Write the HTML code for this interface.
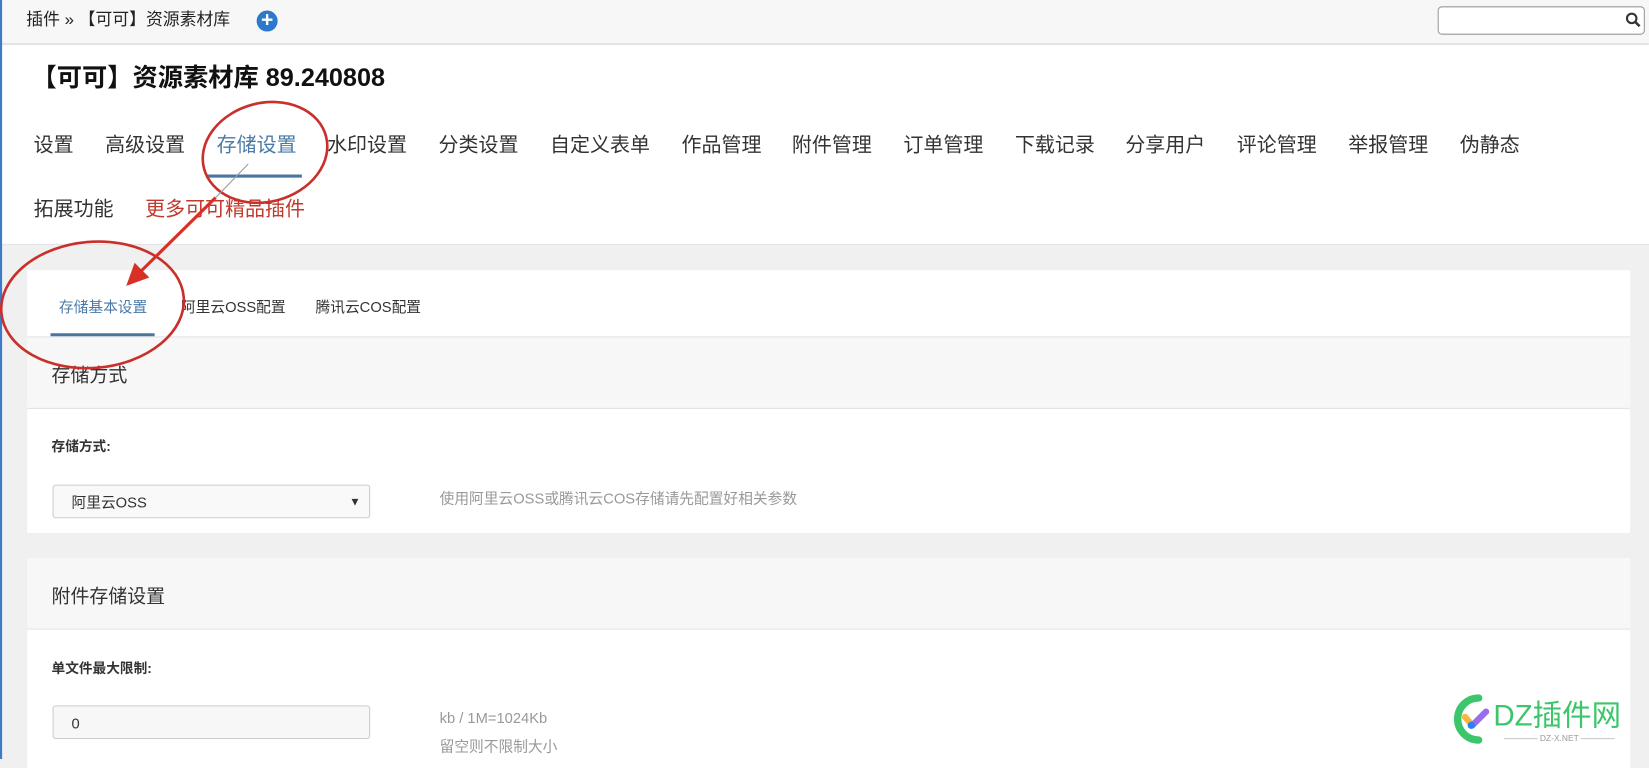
<!DOCTYPE html>
<html><head><meta charset="utf-8">
<style>
html,body{margin:0;padding:0;width:1649px;height:759px;overflow:hidden;background:#f0f0f0;}
#w{position:absolute;left:0;top:0;width:1568px;height:722px;transform:scale(1.0517,1.0512);transform-origin:0 0;font-family:"Liberation Sans","Noto Sans CJK SC",sans-serif;color:#333;background:#f0f0f0;}
.a{position:absolute;white-space:nowrap;}
#top{position:absolute;left:0;top:0;width:1568px;height:41px;background:#f7f7f7;box-shadow:0 2px 2px #ddd;}
#hd{position:absolute;left:0;top:43px;width:1568px;height:189px;background:#fff;border-bottom:1px solid #e3e3e3;}
.nav{position:absolute;top:127px;font-size:19px;color:#333;line-height:24px;}
.card{position:absolute;left:26px;width:1524px;background:#fff;}
.sh{position:absolute;left:0;width:1524px;height:67px;background:#f7f7f7;border-top:1px solid #e3e3e3;border-bottom:1px solid #e3e3e3;}
.inp{position:absolute;left:50px;width:302px;height:32px;border:1px solid #ccc;border-radius:3px;background:#f7f7f7;font-size:14px;line-height:32px;box-sizing:border-box;padding-left:17px;color:#333;}
</style></head><body><div id="w">
<div style="position:absolute;left:0;top:0;width:2px;height:722px;background:#3d7bc6;z-index:5"></div>
<div id="top"></div>
<div class="a" style="left:25px;top:10px;font-size:16px;line-height:20px;color:#222">插件 » 【可可】资源素材库</div>
<div class="a" style="left:244px;top:10px;width:20px;height:20px;border-radius:50%;background:#2c78cc;color:#fff;font-size:20px;line-height:19px;text-align:center;font-weight:bold">+</div>
<div class="a" style="left:1367px;top:6px;width:197px;height:27px;border:1px solid #999;border-radius:4px;background:#fff;box-sizing:border-box"></div>
<svg class="a" style="left:1545px;top:11px" width="16" height="16" viewBox="0 0 16 16"><circle cx="6.5" cy="6.5" r="4.5" fill="none" stroke="#333" stroke-width="2"/><path d="M10 10 L14 14" stroke="#333" stroke-width="2.4"/></svg>
<div id="hd"></div>
<div class="a" style="left:30px;top:60px;font-size:24px;font-weight:bold;color:#111;line-height:29px">【可可】资源素材库 89.240808</div>
<div class="nav a" style="left:32px">设置</div>
<div class="nav a" style="left:100px">高级设置</div>
<div class="nav a" style="left:206px;color:#4a7aa8">存储设置</div>
<div class="a" style="left:196px;top:166px;width:91px;height:3px;background:#4a76a2"></div>
<div class="nav a" style="left:311px">水印设置</div>
<div class="nav a" style="left:417px">分类设置</div>
<div class="nav a" style="left:523px">自定义表单</div>
<div class="nav a" style="left:648px">作品管理</div>
<div class="nav a" style="left:753px">附件管理</div>
<div class="nav a" style="left:859px">订单管理</div>
<div class="nav a" style="left:965px">下载记录</div>
<div class="nav a" style="left:1070px">分享用户</div>
<div class="nav a" style="left:1176px">评论管理</div>
<div class="nav a" style="left:1282px">举报管理</div>
<div class="nav a" style="left:1388px">伪静态</div>
<div class="nav a" style="left:32px;top:188px">拓展功能</div>
<div class="nav a" style="left:138px;top:188px;color:#c0392b">更多可可精品插件</div>

<div class="card" style="top:257px;height:250px">
  <div class="a" style="left:30px;top:25px;font-size:14px;color:#4a7aa8">存储基本设置</div>
  <div class="a" style="left:22px;top:60px;width:99px;height:3px;background:#4a76a2"></div>
  <div class="a" style="left:146px;top:25px;font-size:14px;color:#333">阿里云OSS配置</div>
  <div class="a" style="left:274px;top:25px;font-size:14px;color:#333">腾讯云COS配置</div>
  <div class="sh" style="top:63px"></div>
  <div class="a" style="left:23px;top:86px;font-size:18px;color:#333">存储方式</div>
  <div class="a" style="left:23px;top:157px;font-size:13px;font-weight:bold;color:#333">存储方式:</div>
  <div class="inp" style="left:24px;top:204px;background:#f9f9f9">阿里云OSS<span style="position:absolute;right:8px;font-size:11px">▼</span></div>
  <div class="a" style="left:392px;top:207px;font-size:14px;color:#999">使用阿里云OSS或腾讯云COS存储请先配置好相关参数</div>
</div>
<div class="card" style="top:531px;height:200px">
  <div class="sh" style="top:0;border-top:none"></div>
  <div class="a" style="left:23px;top:22px;font-size:18px;color:#333">附件存储设置</div>
  <div class="a" style="left:23px;top:94px;font-size:13px;font-weight:bold;color:#333">单文件最大限制:</div>
  <div class="inp" style="left:24px;top:140px">0</div>
  <div class="a" style="left:392px;top:144px;font-size:14px;color:#999">kb / 1M=1024Kb</div>
  <div class="a" style="left:392px;top:169px;font-size:14px;color:#999">留空则不限制大小</div>
</div>

<svg class="a" style="left:0;top:0;z-index:6" width="1568" height="722">
  <ellipse cx="252" cy="145" rx="60" ry="47" transform="rotate(-15 252 145)" fill="none" stroke="#c9302c" stroke-width="2.5"/>
  <ellipse cx="88" cy="290" rx="87" ry="60" transform="rotate(-5 88 290)" fill="none" stroke="#c9302c" stroke-width="2.5"/>
  <line x1="236" y1="156" x2="205" y2="188" stroke="#999" stroke-width="1"/>
  <line x1="205" y1="188" x2="132" y2="260" stroke="#d93025" stroke-width="3"/>
  <path d="M120 272 L128 250 L142 264 Z" fill="#d93025"/>
</svg>

<svg class="a" style="left:1378px;top:660px" width="40" height="50" viewBox="0 0 40 50"><path d="M28 4 A20 20 0 1 0 28 44" fill="none" stroke="#3cc66b" stroke-width="7" stroke-linecap="round"/><path d="M15 22 L22 30" stroke="#f5b941" stroke-width="6" stroke-linecap="round"/><path d="M22 30 L35 17" stroke="#9a6cf0" stroke-width="6" stroke-linecap="round"/><circle cx="21" cy="30" r="3.5" fill="#2f7ff0"/></svg>
<div class="a" style="left:1420px;top:664px;font-size:28px;color:#3cc66b;line-height:34px">DZ插件网</div>
<div class="a" style="left:1430px;top:698px;font-size:8px;color:#999">———— DZ-X.NET ————</div>
</div></body></html>
